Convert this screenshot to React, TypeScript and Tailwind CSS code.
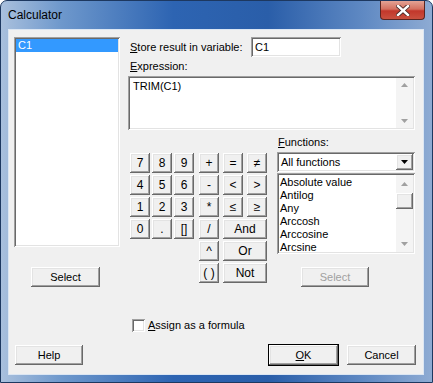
import React from 'react';

const raised =
  'bg-[#f0f0f0] shadow-[inset_-1px_-1px_#696969,inset_1px_1px_#ffffff,inset_-2px_-2px_#a0a0a0,inset_2px_2px_#e3e3e3]';
const sunken =
  'bg-white shadow-[inset_1px_1px_#a0a0a0,inset_-1px_-1px_#ffffff,inset_2px_2px_#696969,inset_-2px_-2px_#e3e3e3]';

const Btn: React.FC<{ label: React.ReactNode; className?: string; disabled?: boolean; def?: boolean }> = ({
  label,
  className = '',
  disabled,
  def,
}) => (
  <div
    className={`flex items-center justify-center h-[20px] ${raised} ${
      def ? 'outline outline-1 outline-black' : ''
    } ${disabled ? 'text-[#a0a0a0]' : 'text-black'} ${className}`}
  >
    {label}
  </div>
);

const Arrow: React.FC<{ up?: boolean; color?: string }> = ({ up, color = '#a0a0a0' }) => (
  <svg width="7" height="4" viewBox="0 0 7 4">
    <path d={up ? 'M0 4 L3.5 0 L7 4 Z' : 'M0 0 L3.5 4 L7 0 Z'} fill={color} />
  </svg>
);

const functions = ['Absolute value', 'Antilog', 'Any', 'Arccosh', 'Arccosine', 'Arcsine'];

const App: React.FC = () => {
  return (
    <div className="w-[433px] h-[383px] flex flex-col rounded-t-[7px] border border-[#1d3860] bg-[linear-gradient(90deg,#a9c0dd_0%,#6e98cc_14%,#2d64b2_40%,#2a5ea9_62%,#5f89c3_84%,#8eabd3_100%)] font-['Liberation_Sans',Arial,sans-serif] text-[11px] text-black overflow-hidden">
      {/* title bar */}
      <div className="h-[28px] flex items-start">
        <div className="pl-[7px] pt-[7px] text-[12px] leading-[14px] text-black flex-1">Calculator</div>
        <div className="mr-[7px] w-[45px] h-[19px] rounded-b-[4px] border border-[#5b2520] border-t-0 bg-[linear-gradient(180deg,#e3a395_0%,#d4705f_45%,#c2372b_55%,#c9503f_100%)] flex items-center justify-center">
          <svg width="14" height="11" viewBox="0 0 14 11">
            <path d="M2 1 L12 10 M12 1 L2 10" stroke="#4a2a28" strokeWidth="4.2" strokeLinecap="square" />
            <path d="M2 1 L12 10 M12 1 L2 10" stroke="#ffffff" strokeWidth="2.4" strokeLinecap="square" />
          </svg>
        </div>
      </div>

      {/* client area */}
      <div className="ml-[7px] w-[416px] h-[346px] border border-[#dbe6f3] bg-[#f0f0f0] pl-[5px] pt-[7px] flex flex-col">
        <div className="flex">
          {/* left column */}
          <div className="w-[106px] flex flex-col">
            <div className={`h-[210px] ${sunken} p-[2px]`}>
              <div className="h-[13px] bg-[#3399ff] text-white leading-[13px] pl-[2px]">C1</div>
            </div>
            <Btn label="Select" className="mt-[20px] ml-[17px] w-[69px]" />
          </div>

          {/* right column */}
          <div className="ml-[8px] w-[287px] flex flex-col">
            <div className="h-[20px] flex items-center">
              <div className="w-[123px] pl-[2px]">
                <span className="underline">S</span>tore result in variable:
              </div>
              <div className={`w-[90px] h-[20px] ${sunken} pl-[4px] leading-[20px]`}>C1</div>
            </div>
            <div className="mt-[2px] h-[14px] leading-[14px] pl-[2px]">
              <span className="underline">E</span>xpression:
            </div>
            <div className={`mt-[3px] h-[54px] ${sunken} p-[2px] flex`}>
              <div className="flex-1 pl-[3px] pt-[2px] leading-[13px]">TRIM(C1)</div>
              <div className="w-[17px] flex flex-col items-center justify-between py-[5px] bg-[#f4f4f4]">
                <Arrow up />
                <Arrow />
              </div>
            </div>

            <div className="mt-[5px] flex">
              {/* keypad */}
              <div className="ml-[2px] mt-[18px] flex items-start">
                <div className="grid grid-cols-[20px_20px_20px] auto-rows-[20px] gap-[2px]">
                  {['7', '8', '9', '4', '5', '6', '1', '2', '3', '0', '.', '[ ]'].map((k) => (
                    <Btn key={k} label={k === '[ ]' ? '[]' : k} className="text-[12px]" />
                  ))}
                </div>
                <div className="ml-[5px] grid grid-cols-[20px_20px_20px] auto-rows-[20px] gap-x-[4px] gap-y-[2px]">
                  <Btn label="+" className="text-[12px]" />
                  <Btn label="=" className="text-[12px]" />
                  <Btn label="≠" className="text-[12px]" />
                  <Btn label="-" className="text-[12px]" />
                  <Btn label="<" className="text-[12px]" />
                  <Btn label=">" className="text-[12px]" />
                  <Btn label="*" className="text-[12px]" />
                  <Btn label="≤" className="text-[12px]" />
                  <Btn label="≥" className="text-[12px]" />
                  <Btn label="/" className="text-[12px]" />
                  <Btn label="And" className="col-span-2 text-[12px]" />
                  <Btn label="^" className="text-[12px]" />
                  <Btn label="Or" className="col-span-2 text-[12px]" />
                  <Btn label="( )" className="text-[12px]" />
                  <Btn label="Not" className="col-span-2 text-[12px]" />
                </div>
              </div>

              {/* functions */}
              <div className="ml-[10px] w-[138px] flex flex-col">
                <div className="h-[14px] leading-[14px] pl-[1px]">
                  <span className="underline">F</span>unctions:
                </div>
                <div className={`mt-[3px] h-[20px] ${sunken} p-[2px] flex`}>
                  <div className="flex-1 pl-[2px] leading-[16px]">All functions</div>
                  <div className={`w-[17px] h-[16px] ${raised} flex items-center justify-center`}>
                    <Arrow color="#000000" />
                  </div>
                </div>
                <div className={`mt-[1px] h-[81px] ${sunken} p-[2px] flex`}>
                  <div className="flex-1 pl-[1px] pt-[1px]">
                    {functions.map((f) => (
                      <div key={f} className="h-[13px] leading-[13px]">
                        {f}
                      </div>
                    ))}
                  </div>
                  <div className="w-[17px] flex flex-col items-center bg-[#f4f4f4]">
                    <div className="h-[17px] flex items-center justify-center">
                      <Arrow up />
                    </div>
                    <div className={`mt-[1px] w-[17px] h-[16px] ${raised}`} />
                    <div className="flex-1" />
                    <div className="h-[17px] flex items-center justify-center">
                      <Arrow />
                    </div>
                  </div>
                </div>
                <Btn label="Select" disabled className="mt-[13px] ml-[24px] w-[68px]" />
              </div>
            </div>
          </div>
        </div>

        {/* checkbox */}
        <div className="mt-[32px] ml-[118px] flex items-center h-[13px]">
          <div className={`w-[13px] h-[13px] ${sunken}`} />
          <div className="ml-[3px]">
            <span className="underline">A</span>ssign as a formula
          </div>
        </div>

        {/* bottom buttons */}
        <div className="mt-[13px] flex">
          <Btn label="Help" className="ml-[1px] w-[68px]" />
          <Btn
            label={
              <span>
                <span className="underline">O</span>K
              </span>
            }
            def
            className="ml-[186px] w-[69px]"
          />
          <Btn label="Cancel" className="ml-[9px] w-[69px]" />
        </div>
      </div>
    </div>
  );
};

export default App;
